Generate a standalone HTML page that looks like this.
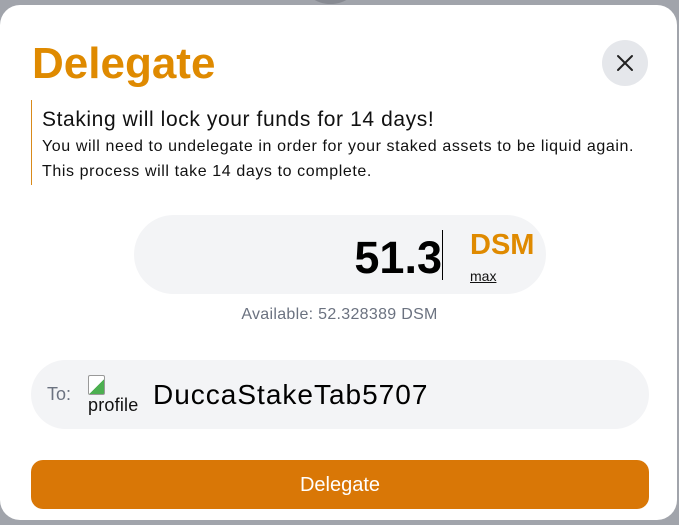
<!DOCTYPE html>
<html><head><meta charset="utf-8"><style>
html,body{margin:0;padding:0;width:679px;height:525px;overflow:hidden;background:#a1a4ab;font-family:"Liberation Sans",sans-serif;}
.blob{position:absolute;left:303px;top:-40px;width:55px;height:44px;border-radius:50%;background:#878a92;}
.modal{position:absolute;left:0;top:5px;width:677px;height:515px;background:#fff;border-radius:20px;}
.title{position:absolute;left:32px;top:34px;font-size:44px;font-weight:bold;color:#df8a00;}
.close{position:absolute;left:602px;top:35px;width:46px;height:46px;border-radius:50%;background:#e5e7eb;}
.warn{position:absolute;left:31px;top:95px;height:85px;border-left:1px solid #d98a1a;padding-left:10px;}
.h{font-size:21px;letter-spacing:0.6px;color:#111;margin-top:8px;}
.p{font-size:16px;letter-spacing:0.6px;color:#111;line-height:25px;margin-top:2px;}
.amt{position:absolute;left:134px;top:210px;width:412px;height:79px;border-radius:40px;background:#f3f4f6;}
.num{position:absolute;right:104px;top:17px;font-size:45px;font-weight:bold;color:#000;}
.cur{position:absolute;left:308px;top:15px;width:1px;height:50px;background:#000;}
.dsm{position:absolute;left:336px;top:14px;font-size:29px;font-weight:bold;color:#df8a00;}
.max{position:absolute;left:336px;top:53px;font-size:14px;text-decoration:underline;color:#111;}
.avail{position:absolute;left:0;width:679px;top:301px;text-align:center;font-size:16px;letter-spacing:0.3px;color:#6b7280;}
.to{position:absolute;left:31px;top:355px;width:618px;height:69px;border-radius:35px;background:#f3f4f6;}
.tol{position:absolute;left:16px;top:24px;font-size:18px;color:#6b7280;}
.img{position:absolute;left:57px;top:15px;font-size:18px;letter-spacing:0.2px;color:#111;line-height:20px;}
.ic{width:15px;height:18px;border:1px solid #999;border-radius:2px;background:linear-gradient(135deg,#fff 55%,#4caf50 55%);}
.name{position:absolute;left:122px;top:19px;font-size:28px;letter-spacing:1px;color:#000;}
.btn{position:absolute;left:31px;top:455px;width:618px;height:49px;border-radius:12px;background:#d97706;color:#fff;font-size:20px;text-align:center;line-height:50px;}
</style></head><body>
<div class="blob"></div>
<div class="modal">
<div class="title">Delegate</div>
<div class="close"><svg width="46" height="46" viewBox="0 0 46 46"><path d="M16 16L30 30M30 16L16 30" stroke="#222" stroke-width="2" stroke-linecap="round"/></svg></div>
<div class="warn"><div class="h">Staking will lock your funds for 14 days!</div>
<div class="p">You will need to undelegate in order for your staked assets to be liquid again.<br>This process will take 14 days to complete.</div></div>
<div class="amt"><div class="num">51.3</div><div class="cur"></div><div class="dsm">DSM</div><div class="max">max</div></div>
<div class="avail">Available: 52.328389 DSM</div>
<div class="to"><div class="tol">To:</div><div class="img"><div class="ic"></div>profile</div><div class="name">DuccaStakeTab5707</div></div>
<div class="btn">Delegate</div>
</div>
</body></html>
